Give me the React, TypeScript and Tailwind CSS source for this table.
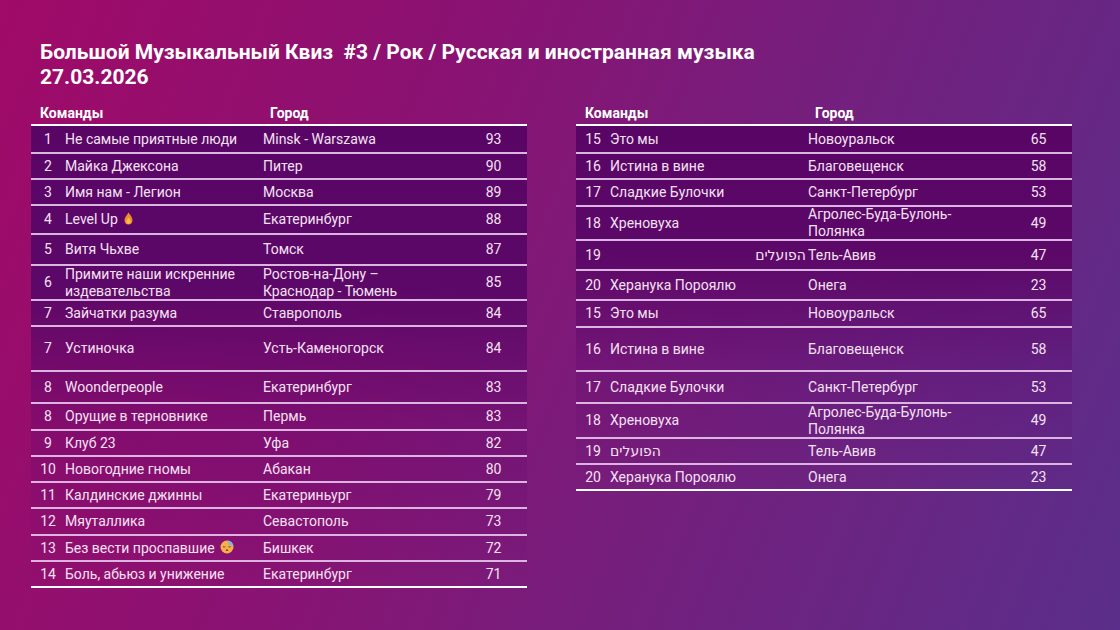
import type { ReactNode } from 'react'

type Row = {
  n: string
  team: ReactNode
  city: ReactNode
  score: string
  h: string
  rtl?: boolean
}

function Fire() {
  return (
    <svg className="inline-block ml-[6px] -mt-[3px] w-[9px] h-[13px] align-middle" viewBox="0 0 9 13">
      <path d="M4.5 0.5 C6 3 8.5 5 8.5 8.3 C8.5 10.9 6.7 12.6 4.5 12.6 C2.3 12.6 0.5 10.9 0.5 8.3 C0.5 5.6 2.6 3.6 4.5 0.5 Z" fill="#f28a2e" />
      <path d="M4.5 5.5 C5.6 7 6.6 8.2 6.6 9.8 C6.6 11.1 5.7 11.9 4.5 11.9 C3.3 11.9 2.4 11.1 2.4 9.8 C2.4 8.3 3.5 7.1 4.5 5.5 Z" fill="#f8c24a" />
    </svg>
  )
}

function Sleepy() {
  return (
    <svg className="inline-block ml-[5px] -mt-[3px] w-[14px] h-[14px] align-middle" viewBox="0 0 14 14">
      <circle cx="7" cy="7" r="6.5" fill="#f5b04a" />
      <path d="M7.5 0.6 A6.5 6.5 0 0 1 13.4 6 L9 5 Z" fill="#7fb6e6" />
      <path d="M3 6.6 Q4.2 7.6 5.4 6.6" stroke="#6b3a1a" strokeWidth="0.9" fill="none" />
      <path d="M8.4 6.6 Q9.6 7.6 10.8 6.6" stroke="#6b3a1a" strokeWidth="0.9" fill="none" />
      <ellipse cx="7" cy="10.2" rx="1.3" ry="0.9" fill="#8a4a1a" />
    </svg>
  )
}

const leftRows: Row[] = [
  { n: '1', team: 'Не самые приятные люди', city: 'Minsk - Warszawa', score: '93', h: 'h-[26px]' },
  { n: '2', team: 'Майка Джексона', city: 'Питер', score: '90', h: 'h-[26px]' },
  { n: '3', team: 'Имя нам - Легион', city: 'Москва', score: '89', h: 'h-[26px]' },
  { n: '4', team: <>Level Up<Fire /></>, city: 'Екатеринбург', score: '88', h: 'h-[29px]' },
  { n: '5', team: 'Витя Чьхве', city: 'Томск', score: '87', h: 'h-[31px]' },
  {
    n: '6',
    team: <>Примите наши искренние<br />издевательства</>,
    city: <>Ростов-на-Дону –<br />Краснодар - Тюмень</>,
    score: '85',
    h: 'h-[35px]',
  },
  { n: '7', team: 'Зайчатки разума', city: 'Ставрополь', score: '84', h: 'h-[26px]' },
  { n: '7', team: 'Устиночка', city: 'Усть-Каменогорск', score: '84', h: 'h-[45px]' },
  { n: '8', team: 'Woonderpeople', city: 'Екатеринбург', score: '83', h: 'h-[32px]' },
  { n: '8', team: 'Орущие в терновнике', city: 'Пермь', score: '83', h: 'h-[27px]' },
  { n: '9', team: 'Клуб 23', city: 'Уфа', score: '82', h: 'h-[26px]' },
  { n: '10', team: 'Новогодние гномы', city: 'Абакан', score: '80', h: 'h-[26px]' },
  { n: '11', team: 'Калдинские джинны', city: 'Екатериньург', score: '79', h: 'h-[26px]' },
  { n: '12', team: 'Мяуталлика', city: 'Севастополь', score: '73', h: 'h-[27px]' },
  { n: '13', team: <>Без вести проспавшие<Sleepy /></>, city: 'Бишкек', score: '72', h: 'h-[26px]' },
  { n: '14', team: 'Боль, абьюз и унижение', city: 'Екатеринбург', score: '71', h: 'h-[26px]' },
]

const rightRows: Row[] = [
  { n: '15', team: 'Это мы', city: 'Новоуральск', score: '65', h: 'h-[26px]' },
  { n: '16', team: 'Истина в вине', city: 'Благовещенск', score: '58', h: 'h-[26px]' },
  { n: '17', team: 'Сладкие Булочки', city: 'Санкт-Петербург', score: '53', h: 'h-[27px]' },
  { n: '18', team: 'Хреновуха', city: <>Агролес-Буда-Булонь-<br />Полянка</>, score: '49', h: 'h-[34px]' },
  { n: '19', team: 'הפועלים', city: 'Тель-Авив', score: '47', h: 'h-[30px]', rtl: true },
  { n: '20', team: 'Херанука Пороялю', city: 'Онега', score: '23', h: 'h-[30px]' },
  { n: '15', team: 'Это мы', city: 'Новоуральск', score: '65', h: 'h-[27px]' },
  { n: '16', team: 'Истина в вине', city: 'Благовещенск', score: '58', h: 'h-[44px]' },
  { n: '17', team: 'Сладкие Булочки', city: 'Санкт-Петербург', score: '53', h: 'h-[32px]' },
  { n: '18', team: 'Хреновуха', city: <>Агролес-Буда-Булонь-<br />Полянка</>, score: '49', h: 'h-[35px]' },
  { n: '19', team: 'הפועלים', city: 'Тель-Авив', score: '47', h: 'h-[26px]' },
  { n: '20', team: 'Херанука Пороялю', city: 'Онега', score: '23', h: 'h-[26px]' },
]

function Table({ rows }: { rows: Row[] }) {
  return (
    <div className="w-[496px]">
      {/* header */}
      <div className="flex h-[24px] items-start pt-[5px] text-[14px] font-bold text-white leading-[16px]">
        <div className="w-[232px] pl-[9px]">Команды</div>
        <div className="pl-[7px]">Город</div>
      </div>
      <div className="border-t-2 border-b-2 border-white bg-[linear-gradient(180deg,#580566_0%,#5c0868_35%,rgba(92,8,110,0.3)_65%,rgba(92,8,110,0)_100%)]">
        {rows.map((r, i) => (
          <div
            key={i}
            className={`flex items-center ${r.h} ${i > 0 ? 'border-t-2 border-[#dcb4e2]' : ''} text-[14px] leading-[17px] text-[#f5e1f2]`}
          >
            <div className="w-[34px] text-center">{r.n}</div>
            <div className={`w-[198px] ${r.rtl ? 'text-right pr-[2px]' : ''}`} dir={r.rtl ? 'rtl' : undefined}>
              {r.team}
            </div>
            <div className="w-[197px]">{r.city}</div>
            <div className="w-[67px] text-center">{r.score}</div>
          </div>
        ))}
      </div>
    </div>
  )
}

export default function App() {
  return (
    <div className="w-[1120px] h-[630px] overflow-hidden bg-[linear-gradient(112deg,#a00a68_0%,#8a1272_35%,#73207e_65%,#5a2e8a_100%)] font-['Roboto','Noto_Sans','DejaVu_Sans',sans-serif]">
      <div className="pt-[40px] pl-[40px] text-[21px] font-bold leading-[25px] text-white">
        <div className="whitespace-pre">Большой Музыкальный Квиз  #3 / Рок / Русская и иностранная музыка</div>
        <div>27.03.2026</div>
      </div>
      <div className="mt-[10px] flex items-start gap-[49px] pl-[31px]">
        <Table rows={leftRows} />
        <Table rows={rightRows} />
      </div>
    </div>
  )
}
